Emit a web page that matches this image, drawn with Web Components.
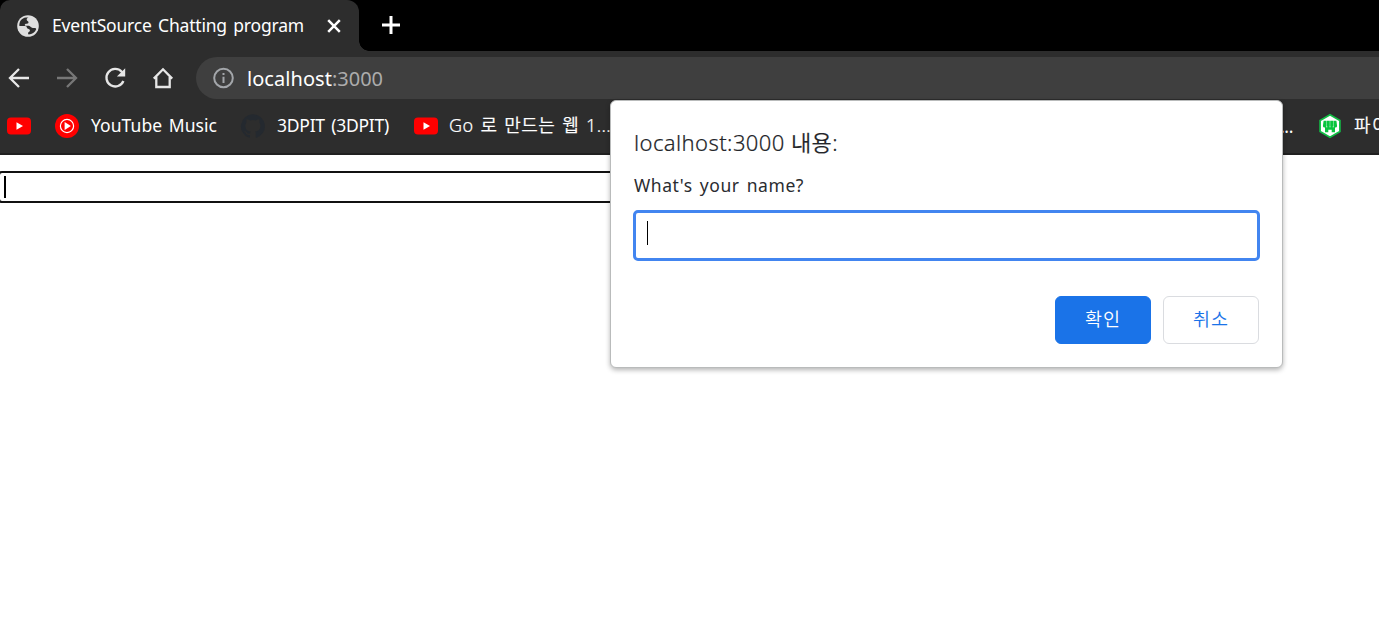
<!DOCTYPE html>
<html lang="ko">
<head>
<meta charset="utf-8">
<title>EventSource Chatting program</title>
<style>
html,body{margin:0;height:100%;overflow:hidden;background:#fff}
body{font-family:"Noto Sans","Noto Sans CJK KR",sans-serif}
</style>
</head>
<body>
<browser-window></browser-window>
<script>
function define(name, html, ready){
  const t=document.createElement('template');
  t.innerHTML=html;
  customElements.define(name, class extends HTMLElement{
    constructor(){ super(); this.attachShadow({mode:'open'}).append(t.content.cloneNode(true)); }
    connectedCallback(){ if(ready) ready(this); }
  });
}

/* A single line of text whose tracking is adjusted to a given width. */
define('fit-text', `<style>
:host{display:block;white-space:nowrap;flex:none;line-height:24px}
span{display:inline-block}
</style><span><slot></slot></span>`, el=>{
  const s=el.shadowRoot.querySelector('span');
  const want=+el.getAttribute('width'), n=el.textContent.length;
  el.style.width=want+'px';
  const have=s.getBoundingClientRect().width;
  if(have) s.style.letterSpacing=((want-have)/n)+'px';
});

define('ui-icon', `<style>
:host{display:block;flex:none;width:24px;height:24px}
svg{display:block;width:100%;height:100%;overflow:visible}
</style><div></div>`, el=>{
  const set={
    globe:`<svg viewBox="0 0 24 24"><circle cx="12" cy="12" r="10.800" fill="#dfdfdf"/><path fill="#2d2d2d" d="M12.500 3.500c-1.600.8-2.300 1.700-1.500 2.900c.6.9 1.500.6 1.500 2c0 1.300-1.500 1.100-2.700 1.300c-1.400.3-1.300 1.700-.2 2.100h3.200c1.900.1 2.100 2.200 3.900 2.200h1.700c1.400 0 1.900.6 1.700 1.400c-1.200 2.700-4 4.900-7.500 5.100c-.9-.9-.6-2 .5-2.700c1.200-.8 1.200-2.600-.5-2.900c-1.500-.2-1.800-.7-1.800-1.800c-.2-1-1.300-1.200-2.700-1.200H3.400c-.5-4.300 2.300-8 6.500-8.500z"/></svg>`,
    close:`<svg viewBox="0 0 24 24"><path d="M6.200 6.200l11.600 11.600M17.800 6.200L6.200 17.800" stroke="#fff" stroke-width="2.500"/></svg>`,
    plus:`<svg viewBox="0 0 24 24"><path d="M12 3v18M3 12h18" stroke="#fff" stroke-width="3"/></svg>`,
    back:`<svg viewBox="0 0 24 24"><path d="M22 12H3.500M12 3L3 12l9 9" fill="none" stroke="#e8e8e8" stroke-width="2.300"/></svg>`,
    forward:`<svg viewBox="0 0 24 24"><path d="M2 12h18.500M12 3l9 9-9 9" fill="none" stroke="#777" stroke-width="2.300"/></svg>`,
    reload:`<svg viewBox="0 0 24 24"><path d="M20.400 15a8.800 8.800 0 1 1-1.700-9.300l2 2" fill="none" stroke="#e6e6e6" stroke-width="2.300"/><path d="M22.200 2.200v8.300h-8.300z" fill="#e6e6e6"/></svg>`,
    home:`<svg viewBox="0 0 24 24"><path d="M2.800 12.600L12 3.300l9.200 9.300M5.300 11v10h13.400V11" fill="none" stroke="#e6e6e6" stroke-width="2.300"/></svg>`,
    info:`<svg viewBox="0 0 24 24"><circle cx="12.500" cy="12" r="9.300" fill="none" stroke="#a3a6aa" stroke-width="2"/><path d="M12.500 10.700v6.300M12.500 7v2.100" stroke="#a3a6aa" stroke-width="2"/></svg>`,
    youtube:`<svg viewBox="0 0 24 24"><rect y="3.600" width="24" height="16.900" rx="4" fill="#f00"/><path d="M9.500 8.200v7.600l6.500-3.800z" fill="#fff"/></svg>`,
    music:`<svg viewBox="0 0 24 24"><circle cx="12" cy="12" r="12" fill="#f00"/><circle cx="12" cy="12" r="6.600" fill="none" stroke="#fff" stroke-width="1.200"/><path d="M9.600 8.100v7.800l6.300-3.900z" fill="#fff"/></svg>`,
    github:`<svg viewBox="0 0 24 24"><path fill="#24292f" d="M12 .3a12 12 0 0 0-3.800 23.400c.6.1.8-.3.8-.6v-2.200c-3.300.7-4-1.400-4-1.400-.6-1.400-1.400-1.800-1.400-1.800-1-.7.1-.7.1-.7 1.200.1 1.900 1.200 1.900 1.200 1 1.800 2.800 1.300 3.500 1 .1-.8.400-1.300.7-1.600-2.700-.3-5.500-1.300-5.500-5.900 0-1.300.5-2.400 1.200-3.200-.1-.3-.5-1.500.1-3.200 0 0 1-.3 3.300 1.200a11.500 11.500 0 0 1 6 0c2.300-1.500 3.300-1.200 3.300-1.200.7 1.700.2 2.900.1 3.200.8.800 1.200 1.900 1.200 3.200 0 4.600-2.800 5.600-5.500 5.900.4.400.8 1.100.8 2.200v3.300c0 .3.200.7.800.6A12 12 0 0 0 12 .3"/></svg>`,
    shop:`<svg viewBox="0 0 24 24"><path d="M12 .8l9.900 5.600v11.200L12 23.200 2.100 17.600V6.400z" fill="#fff" stroke="#12bd45" stroke-width="1.700"/><path d="M5.600 6.700h3v5.300q0 1.500-1.800 1.500t-1.900-1.500zM9 6.700h2.800v5.300q0 1.500-1.400 1.500T9 12zM12.200 6.700H15v5.300q0 1.500-1.400 1.500t-1.400-1.500zM15.400 6.700h3l.7 5.300q0 1.500-1.900 1.500T15.400 12zM7 13.300h10v5h-3.300v-2.600h-3.400v2.600H7z" fill="#08c53d"/></svg>`
  };
  el.shadowRoot.querySelector('div').innerHTML=set[el.getAttribute('name')];
});

define('tab-strip', `<style>
:host{display:flex;height:51px;background:#000}
.tab{position:relative;box-sizing:border-box;width:359px;height:51px;background:#2d2d2d;border-radius:10px 12px 0 0;display:flex;align-items:center;padding-left:16px}
.tab::after{content:"";position:absolute;left:100%;bottom:0;width:10px;height:10px;background:radial-gradient(circle at 10px 0,transparent 9.500px,#2d2d2d 10px)}
fit-text{margin:0 18px 2px 12px;color:#fff;font-size:17.500px;word-spacing:2px}
.add{align-self:center;margin:0 0 1px 20px}
</style>
<div class="tab"><ui-icon name="globe"></ui-icon><fit-text width="252">EventSource Chatting program</fit-text><ui-icon name="close"></ui-icon></div>
<ui-icon class="add" name="plus"></ui-icon>`);

define('tool-bar', `<style>
:host{display:flex;align-items:center;height:54px;background:#2d2d2d;padding-left:7px;gap:24px}
.box{flex:1;height:42px;box-sizing:border-box;margin-left:-3px;border-radius:21px 0 0 21px;background:#3f3f3f;display:flex;align-items:center;padding-left:15px;font-size:20px}
fit-text{color:#fff;padding-top:1px}
.host{margin-left:12px}
.port{color:#acacac}
</style>
<ui-icon name="back"></ui-icon><ui-icon name="forward"></ui-icon><ui-icon name="reload"></ui-icon><ui-icon name="home"></ui-icon>
<div class="box"><ui-icon name="info"></ui-icon><fit-text class="host" width="85">localhost</fit-text><fit-text class="port" width="51">:3000</fit-text></div>`);

define('book-mark', `<style>
:host{display:flex;flex:none;align-items:center;gap:12px;color:#fff;font-size:17.500px;word-spacing:2px}
::slotted(fit-text){margin-bottom:2px}
</style><ui-icon></ui-icon><slot></slot>`, el=>{
  const old=el.shadowRoot.querySelector('ui-icon'), i=document.createElement('ui-icon');
  i.setAttribute('name',el.getAttribute('icon'));
  old.replaceWith(i);
});

define('bookmark-bar', `<style>
:host{display:flex;align-items:center;box-sizing:border-box;height:50px;background:#2d2d2d;border-bottom:2px solid #202020;padding:0 0 6px 7px;overflow:hidden}
.ko{font-weight:350;font-size:18px;-webkit-text-stroke:.2px #fff}
.music{margin-left:24px}.git{margin-left:24px}.go{margin-left:25px}
.go fit-text{margin-left:-1px}
.more{margin-left:669px;color:#fff;font-size:17.500px}
.shop{margin-left:25px}
</style>
<book-mark icon="youtube"></book-mark>
<book-mark class="music" icon="music"><fit-text width="126">YouTube Music</fit-text></book-mark>
<book-mark class="git" icon="github"><fit-text width="112">3DPIT (3DPIT)</fit-text></book-mark>
<book-mark class="go" icon="youtube"><fit-text class="ko" width="162">Go 로 만드는 웹 1...</fit-text></book-mark>
<fit-text class="more" width="13">...</fit-text>
<book-mark class="shop" icon="shop"><fit-text class="ko" width="36">파이</fit-text></book-mark>`);

define('page-content', `<style>
:host{display:block;flex:1;padding-top:16px;background:#fff}
.field{box-sizing:border-box;width:900px;height:32px;margin-left:-2px;border:2px solid #111;border-radius:4px;padding:3px 0 0 4px}
i{display:block;width:2px;height:22px;background:#000}
</style><div class="field"><i></i></div>`);

define('prompt-button', `<style>
:host{box-sizing:border-box;width:96px;height:48px;border-radius:6px;display:flex;justify-content:center;align-items:center;padding-bottom:4px;font-size:18.500px;font-family:"Noto Sans CJK KR",sans-serif;font-weight:350;border:1px solid #dadce0;color:#1a73e8;background:#fff}
:host([primary]){background:#1a73e8;border-color:#1a73e8;color:#fff}
</style><slot></slot>`);

define('prompt-dialog', `<style>
:host{box-sizing:border-box;width:673px;height:268px;background:#fff;border:1px solid #b9bbbb;border-radius:6px;box-shadow:0 2px 5px rgba(0,0,0,.3);padding:28px 23px 0 22px;color:#2a2c30}
.title{margin-left:1px;font-size:22px;color:#24262a;line-height:26px;font-weight:350;-webkit-text-stroke:.2px #24262a}
.msg{margin:18px 0 13px 1px;font-size:17.500px;word-spacing:2px}
.field{box-sizing:border-box;height:51px;border:3px solid #4285f0;border-radius:5px;padding:8px 0 0 11px;margin-right:-1px}
i{display:block;width:1px;height:24px;background:#000}
.row{display:flex;justify-content:flex-end;gap:12px;margin-top:35px}
</style>
<fit-text class="title" width="204">localhost:3000 내용:</fit-text>
<fit-text class="msg" width="170">What's your name?</fit-text>
<div class="field"><i></i></div>
<div class="row"><prompt-button primary><fit-text width="36">확인</fit-text></prompt-button><prompt-button><fit-text width="36">취소</fit-text></prompt-button></div>`);

define('browser-window', `<style>
:host{display:flex;flex-direction:column;position:relative;width:1379px;height:636px;overflow:hidden}
prompt-dialog{position:absolute;left:610px;top:100px}
</style><tab-strip></tab-strip><tool-bar></tool-bar><bookmark-bar></bookmark-bar><page-content></page-content><prompt-dialog></prompt-dialog>`);
</script>
</body>
</html>
